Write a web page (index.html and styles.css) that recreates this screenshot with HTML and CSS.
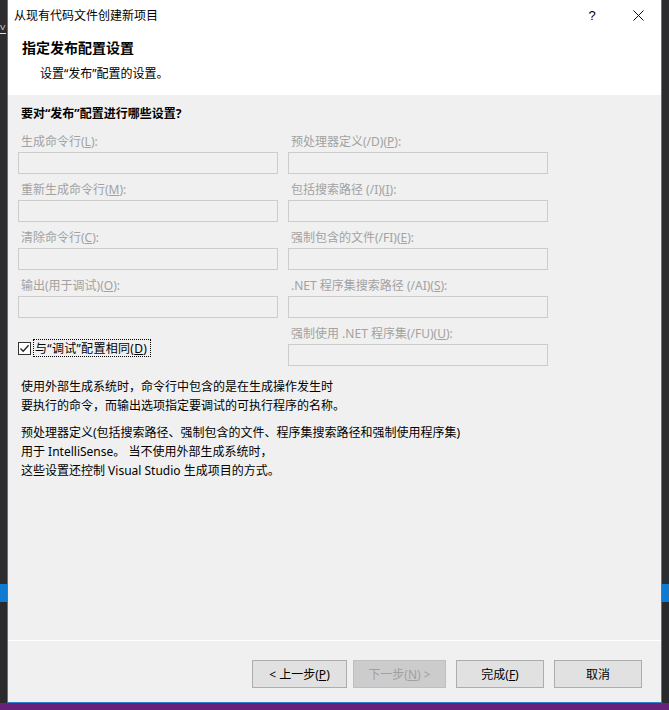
FILE: index.html
```html
<!DOCTYPE html>
<html lang="zh-CN">
<head>
<meta charset="utf-8">
<title>从现有代码文件创建新项目</title>
<link rel="stylesheet" href="styles.css">
</head>
<body>
<div class="desk">
  <div class="strip-left"><span class="menu-v">V</span></div>
  <div class="dialog">
    <div class="titlebar">
      <span class="title">从现有代码文件创建新项目</span>
      <span class="tb-btn help">?</span>
      <span class="tb-btn close">
        <svg width="11" height="11" viewBox="0 0 11 11"><path d="M0.5 0.5 L10.5 10.5 M10.5 0.5 L0.5 10.5" stroke="#111" stroke-width="1" fill="none"/></svg>
      </span>
    </div>
    <div class="header">
      <div class="h-title">指定发布配置设置</div>
      <div class="h-sub">设置“发布”配置的设置。</div>
    </div>
    <div class="content">
      <div class="question">要对“发布”配置进行哪些设置?</div>
      <div class="grid">
        <div class="field c1 r1"><div class="lbl">生成命令行(<u>L</u>):</div><div class="box"></div></div>
        <div class="field c2 r1"><div class="lbl">预处理器定义(/D)(<u>P</u>):</div><div class="box"></div></div>
        <div class="field c1 r2"><div class="lbl">重新生成命令行(<u>M</u>):</div><div class="box"></div></div>
        <div class="field c2 r2"><div class="lbl">包括搜索路径 (/I)(<u>I</u>):</div><div class="box"></div></div>
        <div class="field c1 r3"><div class="lbl">清除命令行(<u>C</u>):</div><div class="box"></div></div>
        <div class="field c2 r3"><div class="lbl">强制包含的文件(/FI)(<u>E</u>):</div><div class="box"></div></div>
        <div class="field c1 r4"><div class="lbl">输出(用于调试)(<u>O</u>):</div><div class="box"></div></div>
        <div class="field c2 r4"><div class="lbl">.NET 程序集搜索路径 (/AI)(<u>S</u>):</div><div class="box"></div></div>
        <div class="check c1 r5">
          <span class="cbox"><svg width="11" height="11" viewBox="0 0 11 11"><path d="M1.5 5.5 L4.2 8.3 L9.6 2.2" stroke="#222" stroke-width="1.3" fill="none"/></svg></span>
          <span class="clabel">与“调试”配置相同(<u>D</u>)</span>
        </div>
        <div class="field c2 r5"><div class="lbl">强制使用 .NET 程序集(/FU)(<u>U</u>):</div><div class="box"></div></div>
      </div>
      <p class="para">使用外部生成系统时，命令行中包含的是在生成操作发生时<br>要执行的命令，而输出选项指定要调试的可执行程序的名称。</p>
      <p class="para">预处理器定义(包括搜索路径、强制包含的文件、程序集搜索路径和强制使用程序集)<br>用于 IntelliSense。 当不使用外部生成系统时，<br>这些设置还控制 Visual Studio 生成项目的方式。</p>
    </div>
    <div class="footer">
      <span class="btn b1">&lt; 上一步(<u>P</u>)</span>
      <span class="btn b2 disabled">下一步(<u>N</u>) &gt;</span>
      <span class="btn b3">完成(<u>F</u>)</span>
      <span class="btn b4">取消</span>
    </div>
  </div>
  <div class="strip-right"></div>
</div>
</body>
</html>
```
FILE: styles.css
```css
html, body {
  margin: 0;
  padding: 0;
}
body {
  width: 669px;
  height: 710px;
  overflow: hidden;
  background: linear-gradient(to bottom, #2d2d30 0, #2d2d30 584px, #0e7ad1 584px, #0e7ad1 602px, #2a2a2c 602px, #2a2a2c 703px, #68217a 703px);
  font-family: "Noto Sans", "Noto Sans CJK SC", sans-serif;
  font-size: 12px;
  color: #000;
}
.desk {
  display: flex;
  height: 710px;
}
.strip-left {
  width: 7px;
  overflow: hidden;
}
.menu-v {
  display: block;
  width: 6px;
  margin-top: 23px;
  color: #ddd;
  font-family: "Liberation Sans", sans-serif;
  font-size: 8px;
  line-height: 10px;
  border-bottom: 1px solid #ddd;
}
.strip-right {
  flex: 1;
}
.dialog {
  width: 653px;
  height: 702px;
  border: 1px solid #2f7fcf;
  border-top: none;
  display: flex;
  flex-direction: column;
  background: #f0f0f0;
}
.titlebar {
  height: 30px;
  background: #fff;
  display: flex;
  align-items: center;
}
.title {
  flex: 1;
  padding-left: 6px;
  padding-top: 2px;
  line-height: 16px;
  font-size: 12px;
  color: #000;
}
.tb-btn {
  width: 46px;
  height: 30px;
  display: flex;
  align-items: center;
  justify-content: center;
}
.help {
  font-size: 13px;
  padding-top: 1px;
  font-family: "Liberation Sans", sans-serif;
}
.header {
  height: 65px;
  background: #fff;
}
.h-title {
  font-weight: bold;
  font-size: 14px;
  line-height: 20px;
  margin-top: 8px;
  padding-left: 14px;
}
.h-sub {
  margin-top: 6px;
  padding-left: 32px;
  line-height: 20px;
}
.content {
  flex: 1;
  padding: 7px 0 0 10px;
}
.question {
  font-weight: bold;
  line-height: 20px;
  padding-top: 2px;
  padding-left: 3px;
  margin-bottom: 6px;
}
.grid {
  display: grid;
  grid-template-columns: 260px 260px;
  column-gap: 10px;
  row-gap: 4px;
}
.c1 { grid-column: 1; }
.c2 { grid-column: 2; }
.r1 { grid-row: 1; }
.r2 { grid-row: 2; }
.r3 { grid-row: 3; }
.r4 { grid-row: 4; }
.r5 { grid-row: 5; }
.lbl {
  color: #a2a2a2;
  line-height: 20px;
  padding-top: 2px;
  padding-left: 3px;
  white-space: nowrap;
}
.box {
  height: 20px;
  border: 1px solid #cccccc;
  background: #f0f0f0;
}
.check {
  display: flex;
  align-items: center;
  align-self: end;
  margin-bottom: 10px;
}
.cbox {
  width: 11px;
  height: 11px;
  border: 1px solid #333;
  background: #fff;
  display: flex;
}
.clabel {
  margin-left: 3px;
  line-height: 15px;
  padding: 1px 3px 0 1px;
  letter-spacing: 0.3px;
  outline: 1px dotted #000;
}
.para {
  margin: 0;
  line-height: 19px;
  padding-left: 3px;
}
.para:first-of-type {
  margin-top: 11px;
}
.para + .para {
  margin-top: 8px;
}
.footer {
  height: 42px;
  border-top: 1px solid #fff;
  padding: 19px 19px 0 0;
  display: flex;
  justify-content: flex-end;
  align-items: flex-start;
}
.btn {
  box-sizing: border-box;
  height: 28px;
  border: 1px solid #adadad;
  background: #e1e1e1;
  display: flex;
  align-items: center;
  justify-content: center;
  line-height: 16px;
  padding-top: 1px;
}
.b1 { width: 95px; }
.b2 { width: 93px; margin-left: 6px; }
.b3 { width: 88px; margin-left: 10px; }
.b4 { width: 88px; margin-left: 10px; }
.disabled {
  background: #cccccc;
  border-color: #bfbfbf;
  color: #a0a0a0;
}
```
